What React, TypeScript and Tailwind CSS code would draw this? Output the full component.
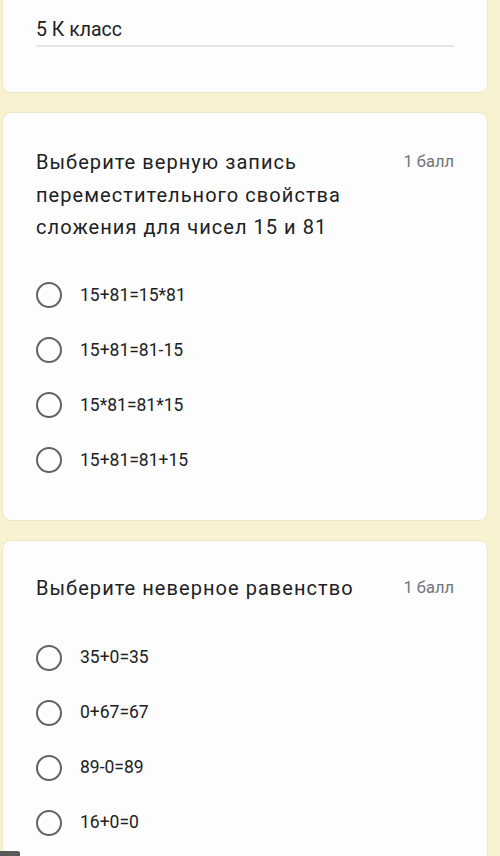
const font = { fontFamily: "Roboto, 'Noto Sans', sans-serif" };

type Question = {
  title: string;
  options: string[];
};

const questions: Question[] = [
  {
    title: "Выберите верную запись переместительного свойства сложения для чисел 15 и 81",
    options: ["15+81=15*81", "15+81=81-15", "15*81=81*15", "15+81=81+15"],
  },
  {
    title: "Выберите неверное равенство",
    options: ["35+0=35", "0+67=67", "89-0=89", "16+0=0"],
  },
];

const Radio = () => (
  <span className="block w-[26px] h-[26px] rounded-full border-[2.5px] border-[#5f6368] shrink-0" />
);

const QuestionCard = ({ q, last }: { q: Question; last?: boolean }) => (
  <div
    className={`bg-[#fdfdfd] border border-[#ece6c6] rounded-[9px] pl-[33px] pr-[33px] ${
      last ? "pt-[31px] pb-[40px]" : "pt-[33px] pb-[32px]"
    }`}
  >
    <div className="flex items-start justify-between gap-4">
      <h2 className="text-[20px] leading-[32.5px] tracking-[1.05px] text-[#202124] max-w-[345px]">{q.title}</h2>
      <span className="text-[16.5px] leading-[32.5px] text-[#70757a] shrink-0">1 балл</span>
    </div>
    <div className={`flex flex-col ${last ? "mt-[26px]" : "mt-[24px]"}`}>
      {q.options.map((o) => (
        <label key={o} className="flex items-center h-[55px]">
          <Radio />
          <span className="ml-[18px] text-[17.5px] text-[#202124]">{o}</span>
        </label>
      ))}
    </div>
  </div>
);

export default function App() {
  return (
    <div className="relative w-[500px] h-[856px] overflow-hidden bg-[#f8f2d0]" style={font}>
      <div className="flex flex-col gap-[19px] pl-[2px] pr-[12px]">
        <div className="bg-[#fdfdfd] border border-t-0 border-[#ece6c6] rounded-b-[9px] pl-[33px] pr-[33px] pt-[17px] h-[93px]">
          <div className="text-[19.5px] leading-[26px] text-[#202124] pb-[2px] border-b-[2px] border-[#e6e6e6]">
            5 К класс
          </div>
        </div>
        {questions.map((q, i) => (
          <QuestionCard key={i} q={q} last={i === questions.length - 1} />
        ))}
      </div>
      <div className="absolute left-0 bottom-0 w-[20px] h-[5px] bg-[#5a5a5a] rounded-tr-[2px]" />
    </div>
  );
}
